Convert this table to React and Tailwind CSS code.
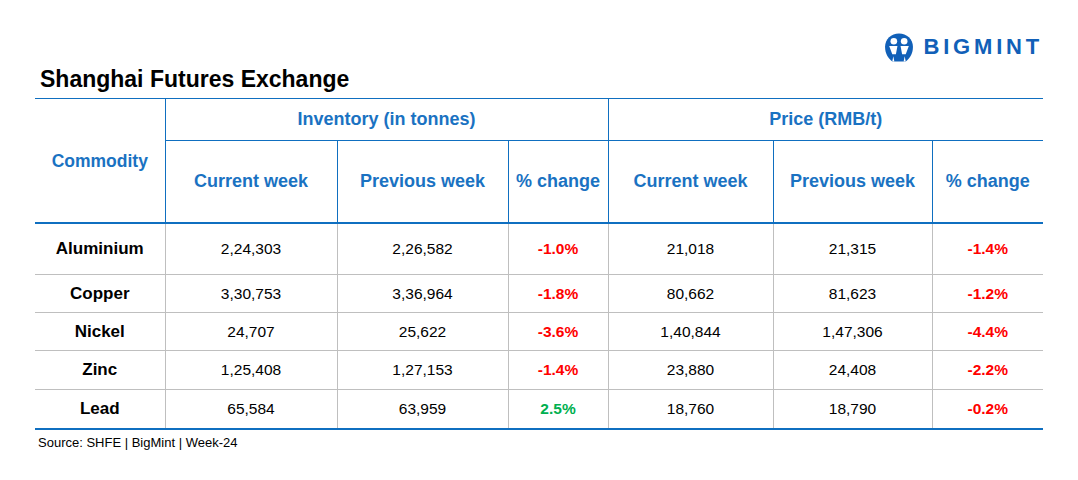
const rows = [
  { name: "Aluminium", ic: "2,24,303", ip: "2,26,582", ich: "-1.0%", pc: "21,018", pp: "21,315", pch: "-1.4%", h: "h-[52px]" },
  { name: "Copper", ic: "3,30,753", ip: "3,36,964", ich: "-1.8%", pc: "80,662", pp: "81,623", pch: "-1.2%", h: "h-[38px]" },
  { name: "Nickel", ic: "24,707", ip: "25,622", ich: "-3.6%", pc: "1,40,844", pp: "1,47,306", pch: "-4.4%", h: "h-[38px]" },
  { name: "Zinc", ic: "1,25,408", ip: "1,27,153", ich: "-1.4%", pc: "23,880", pp: "24,408", pch: "-2.2%", h: "h-[39px]" },
  { name: "Lead", ic: "65,584", ip: "63,959", ich: "2.5%", pc: "18,760", pp: "18,790", pch: "-0.2%", h: "h-[39px]" },
];

function Pct({ v }) {
  const up = !v.startsWith("-");
  return <span className={`font-bold ${up ? "text-[#00b050]" : "text-[#ff0000]"}`}>{v}</span>;
}

function Logo() {
  return (
    <div className="flex items-center gap-[10px]">
      <svg width="30" height="31" viewBox="0 0 29 29">
        <path d="M14.5 1 C22 1 28 6.5 28 14 C28 20 25 25 21 28 L8 28 C4 25 1 20 1 14 C1 6.5 7 1 14.5 1 Z" fill="#1160b8" />
        <circle cx="9.5" cy="8.5" r="3.2" fill="#fff" />
        <circle cx="19.5" cy="8.5" r="3.2" fill="#fff" />
        <path d="M5 13 L13 13 L11.5 21 L8 21 Z" fill="#fff" />
        <path d="M16 13 L24 13 L21 21 L17.5 21 Z" fill="#fff" />
        <path d="M13 17 L14.5 24 L16 17 Z" fill="#1160b8" />
        <path d="M9 23 L10 28 L8 28 Z M20 23 L21 28 L19 28 Z" fill="#fff" />
      </svg>
      <span className="text-[22px] font-extrabold tracking-[3.8px] text-[#1160b8] leading-none">BIGMINT</span>
    </div>
  );
}

export default function App() {
  const th = "border border-[#0f6fc0] text-[#1a72c2] font-bold text-center";
  const td = "border-x border-[#bfbfbf] text-center text-[15.5px] text-black";
  return (
    <div className="w-[1078px] h-[480px] bg-white font-['Liberation_Sans',Arial,sans-serif] relative">
      <div className="flex justify-end pr-[35px] pt-[28px] h-[66px]">
        <Logo />
      </div>
      <h1 className="pl-[40px] text-[23px] font-bold text-black leading-none h-[32px] pt-[2px]">
        Shanghai Futures Exchange
      </h1>
      <div className="pl-[35px]">
        <table className="border-collapse w-[1008px] table-fixed">
          <colgroup>
            <col className="w-[130px]" />
            <col className="w-[172px]" />
            <col className="w-[171px]" />
            <col className="w-[100px]" />
            <col className="w-[165px]" />
            <col className="w-[159px]" />
            <col className="w-[111px]" />
          </colgroup>
          <thead>
            <tr className="h-[42px]">
              <th rowSpan={2} className={`${th} border-l-0 text-[17.5px] pt-[2px]`}>
                Commodity
              </th>
              <th colSpan={3} className={`${th} text-[18px]`}>Inventory (in tonnes)</th>
              <th colSpan={3} className={`${th} border-r-0 text-[18px]`}>Price (RMB/t)</th>
            </tr>
            <tr className="h-[82px] border-b-[2px] border-[#0f6fc0]">
              <th className={`${th} text-[18px]`}>Current week</th>
              <th className={`${th} text-[18px]`}>Previous week</th>
              <th className={`${th} text-[18px]`}>% change</th>
              <th className={`${th} text-[18px]`}>Current week</th>
              <th className={`${th} text-[18px]`}>Previous week</th>
              <th className={`${th} border-r-0 text-[18px]`}>% change</th>
            </tr>
          </thead>
          <tbody>
            {rows.map((r, i) => (
              <tr
                key={r.name}
                className={`${r.h} ${i < rows.length - 1 ? "border-b border-[#bfbfbf]" : "border-b-[2px] border-[#0f6fc0]"}`}
              >
                <td className="text-center text-[17px] font-bold text-black">{r.name}</td>
                <td className={td}>{r.ic}</td>
                <td className={td}>{r.ip}</td>
                <td className={td}><Pct v={r.ich} /></td>
                <td className={td}>{r.pc}</td>
                <td className={td}>{r.pp}</td>
                <td className="text-center text-[15.5px] border-l border-[#bfbfbf]"><Pct v={r.pch} /></td>
              </tr>
            ))}
          </tbody>
        </table>
        <div className="text-[13px] text-black pt-[3px] pl-[3px]">Source: SHFE | BigMint | Week-24</div>
      </div>
    </div>
  );
}
